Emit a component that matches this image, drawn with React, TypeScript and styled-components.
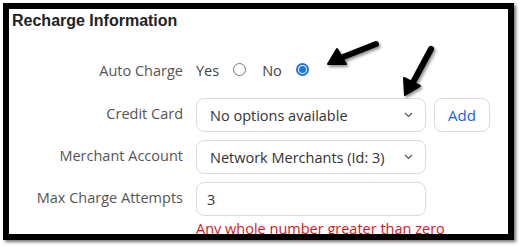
import React from "react";
import styled, { createGlobalStyle } from "styled-components";

const Global = createGlobalStyle`
  html, body { margin: 0; padding: 0; background: #fff; }
  body { font-family: "Open Sans", "Liberation Sans", sans-serif; }
  * { box-sizing: border-box; }
`;

const Page = styled.div`
  position: relative;
  width: 522px;
  height: 246px;
  padding: 3px 0 0 3px;
`;

const Frame = styled.div`
  width: 511px;
  height: 237px;
  border: 6px solid #000;
  box-shadow: 2px 2px 3px rgba(0, 0, 0, 0.55);
  background: #fff;
  overflow: hidden;
  padding: 2px 0 0 3px;
`;

const Title = styled.h2`
  margin: 0;
  font-family: "Liberation Sans", Arial, sans-serif;
  font-weight: 700;
  font-size: 16px;
  line-height: 20px;
  color: #222;
`;

const Form = styled.div`
  display: grid;
  grid-template-columns: 171px 1fr;
  column-gap: 13px;
  row-gap: 8px;
  margin-top: 23px;
  align-items: center;
`;

const Label = styled.div`
  text-align: right;
  font-size: 14.5px;
  color: #555;
  align-self: center;
  margin-top: -3px;
`;

const Radios = styled.div`
  display: flex;
  align-items: center;
  height: 30px;
  font-size: 14.5px;
  color: #444;
  margin-bottom: 6px;
`;

const RadioText = styled.span`
  margin-right: 14px;
  margin-top: 2px;
`;

const Radio = styled.span<{ $checked?: boolean }>`
  width: 13px;
  height: 13px;
  border-radius: 50%;
  border: ${(p) => (p.$checked ? "2px solid #1a73e8" : "1px solid #777")};
  display: inline-flex;
  align-items: center;
  justify-content: center;
  margin-right: 16px;
  &::after {
    content: "";
    display: ${(p) => (p.$checked ? "block" : "none")};
    width: 7px;
    height: 7px;
    border-radius: 50%;
    background: #1a73e8;
  }
`;

const Controls = styled.div`
  display: flex;
  gap: 8px;
`;

const Box = styled.div<{ $w?: number }>`
  width: ${(p) => p.$w ?? 230}px;
  height: 34px;
  border: 1px solid #dcdcdc;
  border-radius: 8px;
  display: flex;
  align-items: center;
  justify-content: space-between;
  padding: 0 12px 0 13px;
  font-size: 14.5px;
  color: #333;
`;

const InputBox = styled(Box)`
  padding-left: 10px;
`;

const Chevron = styled.svg`
  width: 9px;
  height: 6px;
`;

const AddButton = styled.div`
  width: 56px;
  height: 34px;
  border: 1px solid #dcdcdc;
  border-radius: 8px;
  display: flex;
  align-items: center;
  justify-content: center;
  font-size: 15px;
  color: #1a5fe8;
`;

const ErrorText = styled.div`
  grid-column: 2;
  margin-top: -3px;
  font-size: 14.5px;
  line-height: 16px;
  color: #e0141e;
`;

const Overlay = styled.svg`
  position: absolute;
  left: 0;
  top: 0;
  pointer-events: none;
`;

const Caret = () => (
  <Chevron viewBox="0 0 9 6">
    <path d="M1 1l3.5 3.5L8 1" fill="none" stroke="#555" strokeWidth="1.2" />
  </Chevron>
);

export default function App() {
  return (
    <Page>
      <Global />
      <Frame>
        <Title>Recharge Information</Title>
        <Form>
          <Label>Auto Charge</Label>
          <Radios>
            <RadioText>Yes</RadioText>
            <Radio />
            <RadioText>No</RadioText>
            <Radio $checked />
          </Radios>

          <Label>Credit Card</Label>
          <Controls>
            <Box>
              <span>No options available</span>
              <Caret />
            </Box>
            <AddButton>Add</AddButton>
          </Controls>

          <Label>Merchant Account</Label>
          <Controls>
            <Box>
              <span>Network Merchants (Id: 3)</span>
              <Caret />
            </Box>
          </Controls>

          <Label>Max Charge Attempts</Label>
          <Controls>
            <InputBox>
              <span>3</span>
            </InputBox>
          </Controls>

          <ErrorText>Any whole number greater than zero</ErrorText>
        </Form>
      </Frame>
      <Overlay width="522" height="246" viewBox="0 0 522 246">
        <defs>
          <filter id="sh" x="-30%" y="-30%" width="160%" height="160%">
            <feDropShadow dx="1.5" dy="2" stdDeviation="1.5" floodColor="#000" floodOpacity="0.45" />
          </filter>
        </defs>
        <g filter="url(#sh)">
          <path d="M376 44L333 61" stroke="#000" strokeWidth="6" strokeLinecap="round" />
          <path d="M328 64L337 49L346 64Z" fill="#000" stroke="#000" strokeWidth="2" strokeLinejoin="round" />
          <path d="M431 49L410 88" stroke="#000" strokeWidth="6" strokeLinecap="round" />
          <path d="M405 95L404 78L420 86Z" fill="#000" stroke="#000" strokeWidth="2" strokeLinejoin="round" />
        </g>
      </Overlay>
    </Page>
  );
}
